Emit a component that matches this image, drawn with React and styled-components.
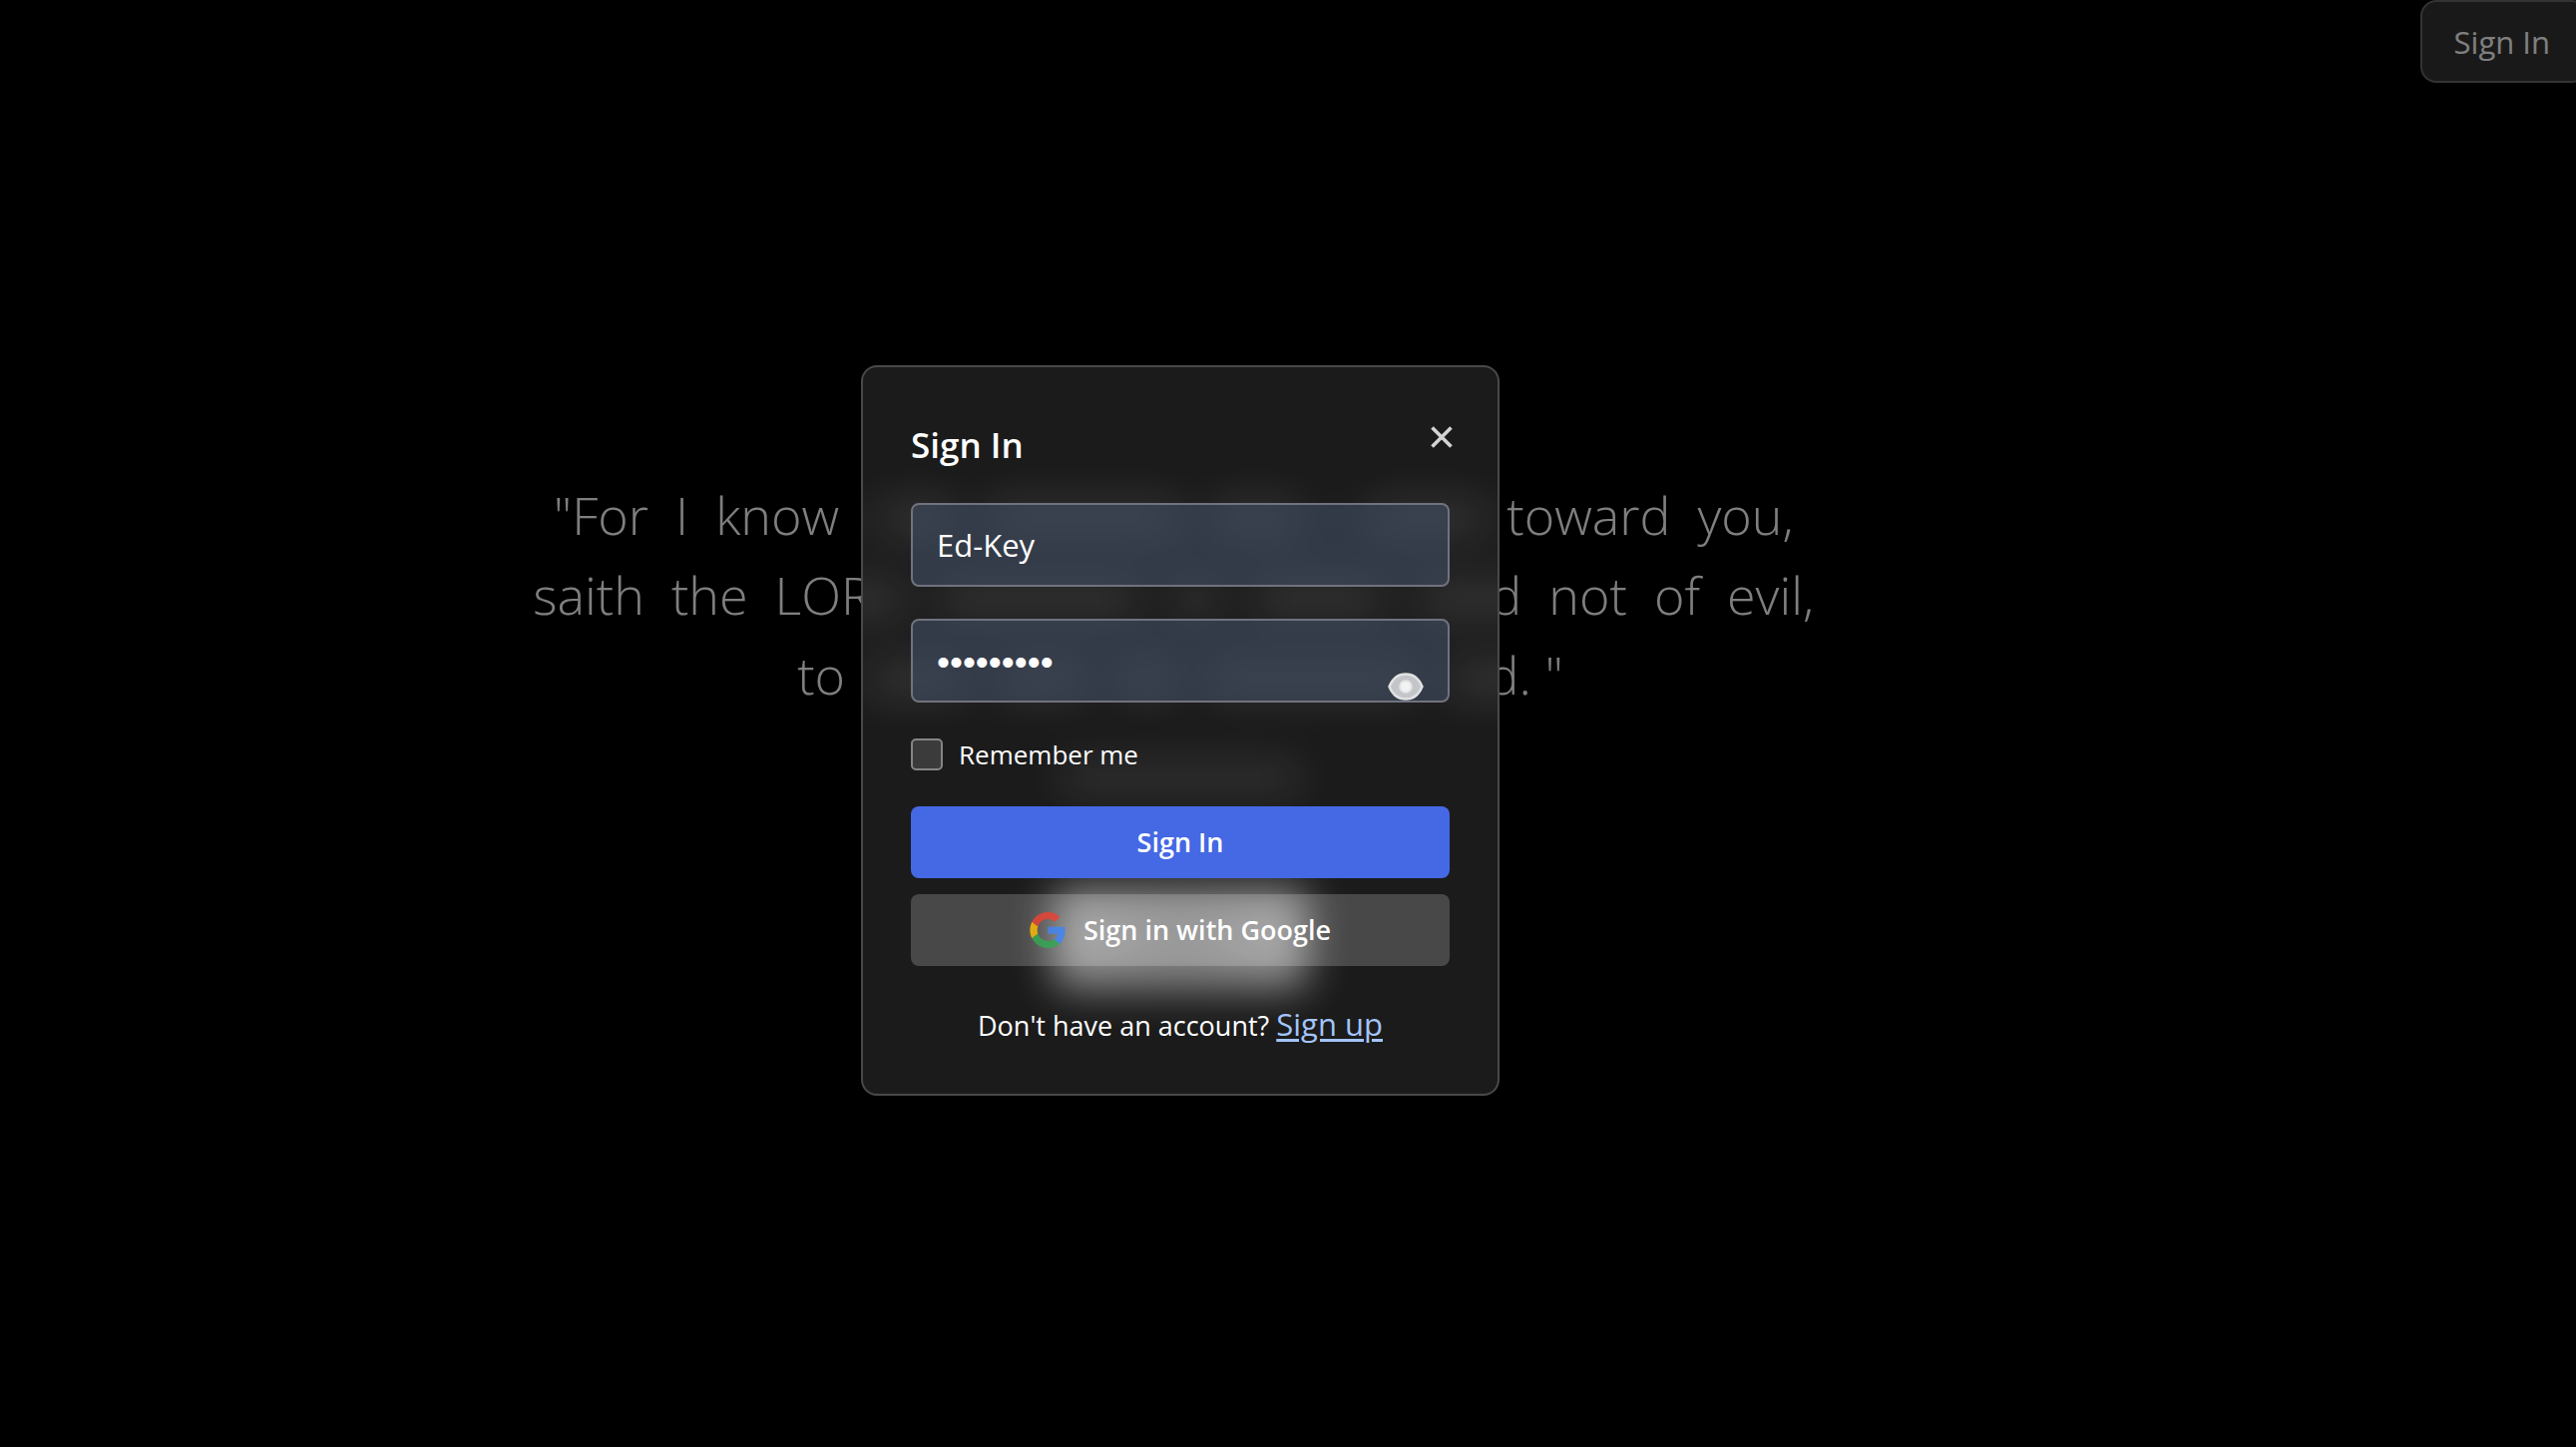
import React, { useState } from "react";
import styled, { createGlobalStyle } from "styled-components";

const GlobalStyle = createGlobalStyle`
  *, *::before, *::after { box-sizing: border-box; }
  html { height: 100%; background: #000; }
  body, #root { min-height: 100%; height: 100%; margin: 0; overflow: hidden; }
  body, button, input { font-family: "Open Sans", "Noto Sans", sans-serif; }
`;

const Page = styled.div`
  position: relative;
  height: 100%;
  color: #fff;
  background: #000;
`;

const Header = styled.header`
  position: absolute;
  top: 0;
  right: -12px;
`;

const HeaderButton = styled.button`
  height: 83px;
  padding: 0 36px 0 32px;
  border: 2px solid rgba(255, 255, 255, 0.25);
  border-radius: 16px;
  background: rgba(255, 255, 255, 0.2);
  color: #fff;
  font-size: 31px;
  line-height: 40px;
`;

const Main = styled.main`
  display: flex;
  flex-direction: column;
  align-items: center;
  padding: 476px 216px 0 0;
`;

const Verse = styled.p`
  width: 1344px;
  max-width: 100%;
  margin: 0;
  font-size: 52px;
  font-weight: 300;
  line-height: 80px;
  text-align: center;
`;

const Overlay = styled.div`
  position: absolute;
  inset: 0;
  display: flex;
  align-items: center;
  justify-content: center;
  padding: 0 216px 0 0;
  background: rgba(0, 0, 0, 0.5);
`;

const Dialog = styled.section`
  position: relative;
  z-index: 0;
  width: 640px;
  margin-top: 14px;
  padding: 48px;
  border: 2px solid #494949;
  border-radius: 16px;
  background: #1b1b1b;
`;

/* Frosted glass: soft light from the page behind the card. */
const Frost = styled.div`
  position: absolute;
  z-index: -1;
  inset: 0;
  overflow: hidden;
  border-radius: 14px;
`;

const FrostLight = styled.div`
  display: flex;
  flex-direction: column;
  align-items: center;
  margin: 0 -40px;
  padding-top: 132px;
  filter: blur(20px);
`;

const FrostLine = styled.div`
  display: flex;
  gap: 34px;
  width: 100%;
  height: 40px;
  margin-bottom: 40px;
`;

const FrostWord = styled.div`
  flex: ${(p) => p.$size} 1 0;
  background: rgba(255, 255, 255, 0.1);
`;

const FrostCaption = styled.div`
  width: 240px;
  height: 32px;
  margin-top: 24px;
  background: rgba(255, 255, 255, 0.1);
`;

const FrostButton = styled.div`
  width: 256px;
  height: 100px;
  margin-top: 94px;
  border-radius: 16px;
  background: radial-gradient(rgba(255, 255, 255, 0.4), rgba(255, 255, 255, 0.52) 60%);
`;

const Title = styled.h2`
  margin: 6px 0 34px;
  font-size: 35px;
  font-weight: 600;
  line-height: 48px;
`;

const CloseButton = styled.button`
  position: absolute;
  top: 46px;
  right: 32px;
  display: grid;
  place-items: center;
  width: 48px;
  height: 48px;
  padding: 0;
  border: 0;
  background: none;
  color: #d4d4d4;
`;

const Form = styled.form`
  display: flex;
  flex-direction: column;
`;

const Field = styled.div`
  position: relative;
  margin-bottom: 32px;
`;

const TextInput = styled.input`
  display: block;
  width: 100%;
  height: 84px;
  padding: ${(p) => (p.$masked ? "4px 24px 0" : "0 24px")};
  border: 2px solid #70737e;
  border-radius: 8px;
  outline: 0;
  background: rgba(75, 90, 117, 0.48);
  color: #fff;
  font-family: ${(p) => (p.$masked ? '"Liberation Sans", sans-serif' : "inherit")};
  font-size: ${(p) => (p.$masked ? "37px" : "31px")};
  line-height: 40px;
`;

const RevealButton = styled.button`
  position: absolute;
  right: 24px;
  bottom: 0;
  display: grid;
  place-items: center;
  width: 40px;
  height: 32px;
  padding: 0;
  border: 0;
  background: none;
`;

const RememberLabel = styled.label`
  display: flex;
  align-items: center;
  gap: 16px;
  height: 40px;
  margin-bottom: 32px;
  font-size: 26px;
  line-height: 40px;
`;

const CheckBox = styled.input`
  appearance: none;
  width: 32px;
  height: 32px;
  margin: 0;
  border: 2px solid #858585;
  border-radius: 5px;
  background: #3b3b3b;
`;

const ActionButton = styled.button`
  display: flex;
  align-items: center;
  justify-content: center;
  gap: 18px;
  height: 72px;
  margin-bottom: 16px;
  padding: 0 24px;
  border: 0;
  border-radius: 8px;
  background: ${(p) => (p.$primary ? "#4568e4" : "rgba(255, 255, 255, 0.2)")};
  color: #fff;
  font-size: 27px;
  font-weight: 600;
  line-height: 40px;
`;

const SignUpLine = styled.p`
  margin: 24px 0 0;
  font-size: 27px;
  line-height: 40px;
  text-align: center;
`;

const SignUpLink = styled.a`
  color: #a3c4fa;
  font-size: 31px;
  line-height: 32px;
  text-decoration: underline;
  text-decoration-thickness: 3px;
  text-underline-offset: 3px;
`;

const CloseIcon = () => (
  <svg width="22" height="22" viewBox="0 0 22 22" fill="none" stroke="currentColor" strokeWidth="3.6" strokeLinecap="butt" aria-hidden="true">
    <path d="M1.5 1.5 20.5 20.5M20.5 1.5 1.5 20.5" />
  </svg>
);

const EyeIcon = () => (
  <svg width="36" height="28" viewBox="0 0 36 28" aria-hidden="true">
    <path d="M1.5 14C5 5.5 11 1.5 18 1.5S31 5.5 34.500 14C31 22.500 25 26.500 18 26.500S5 22.500 1.500 14Z" fill="#c3c5c9" stroke="#e2e2e3" strokeWidth="2.400" />
    <circle cx="18" cy="14" r="5.800" fill="#f3f3f3" stroke="#e4e4e6" strokeWidth="2" />
  </svg>
);

const GoogleIcon = () => (
  <svg width="36" height="36" viewBox="0 0 48 48" opacity="0.84" aria-hidden="true">
    <path fill="#4285F4" d="M47.532 24.552c0-1.632-.132-3.272-.414-4.877H24.48v9.242h12.964c-.538 2.981-2.267 5.618-4.798 7.294v5.998h7.735c4.542-4.181 7.151-10.355 7.151-17.657z" />
    <path fill="#34A853" d="M24.480 48.002c6.474 0 11.933-2.126 15.911-5.795l-7.735-5.998c-2.152 1.464-4.930 2.293-8.167 2.293-6.262 0-11.572-4.225-13.477-9.905H3.029v6.183c4.075 8.105 12.374 13.222 21.451 13.222z" />
    <path fill="#FBBC04" d="M11.003 28.597c-1.005-2.981-1.005-6.209 0-9.190v-6.183H3.029c-3.405 6.783-3.405 14.774 0 21.557z" />
    <path fill="#EA4335" d="M24.480 9.499c3.422-.053 6.730 1.235 9.208 3.599l6.853-6.853C36.202 2.170 30.443-.071 24.480.002 15.403.002 7.104 5.118 3.029 13.224l7.974 6.183C12.900 13.718 18.219 9.499 24.480 9.499z" />
  </svg>
);

const VERSE_TEXT =
  "\"For I know the thoughts that I think toward you, saith the LORD, thoughts of peace, and not of evil, to give you an expected end.";

// Words are set apart by a double space; the closing quote follows a single one.
const VERSE = VERSE_TEXT.split(" ").join("\u00a0 ") + "\u00a0\"";

// Relative word lengths of each verse line where it passes behind the card.
const FROST_LINES = [
  [24, 76, 200, 86, 4, 120, 20],
  [82, 200, 46, 130, 120],
  [12, 95, 85, 55, 200, 90],
];

export default function App() {
  const [user, setUser] = useState("Ed-Key");
  const [password, setPassword] = useState("password1");
  const [shown, setShown] = useState(false);

  return (
    <Page>
      <GlobalStyle />
      <Header>
        <HeaderButton type="button">Sign In</HeaderButton>
      </Header>
      <Main>
        <Verse>{VERSE}</Verse>
      </Main>
      <Overlay>
        <Dialog role="dialog" aria-modal="true" aria-labelledby="dialog-title">
          <Frost aria-hidden="true">
            <FrostLight>
              {FROST_LINES.map((line, row) => (
                <FrostLine key={row}>
                  {line.map((size, i) => (
                    <FrostWord key={i} $size={size} />
                  ))}
                </FrostLine>
              ))}
              <FrostCaption />
              <FrostButton />
            </FrostLight>
          </Frost>
          <Title id="dialog-title">Sign In</Title>
          <CloseButton type="button" aria-label="Close">
            <CloseIcon />
          </CloseButton>
          <Form onSubmit={(e) => e.preventDefault()}>
            <Field>
              <TextInput aria-label="Username" value={user} onChange={(e) => setUser(e.target.value)} />
            </Field>
            <Field>
              <TextInput
                $masked={!shown}
                type={shown ? "text" : "password"}
                aria-label="Password"
                value={password}
                onChange={(e) => setPassword(e.target.value)}
              />
              <RevealButton type="button" aria-label="Show password" onClick={() => setShown(!shown)}>
                <EyeIcon />
              </RevealButton>
            </Field>
            <RememberLabel>
              <CheckBox type="checkbox" />
              Remember me
            </RememberLabel>
            <ActionButton type="submit" $primary>Sign In</ActionButton>
            <ActionButton type="button">
              <GoogleIcon />
              Sign in with Google
            </ActionButton>
          </Form>
          <SignUpLine>
            Don't have an account? <SignUpLink href="#signup">Sign up</SignUpLink>
          </SignUpLine>
        </Dialog>
      </Overlay>
    </Page>
  );
}
